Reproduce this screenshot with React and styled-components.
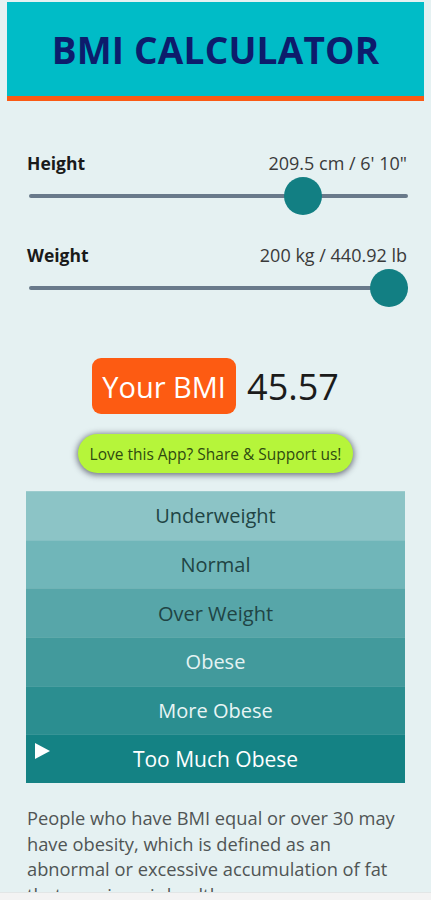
import React, { useState } from "react";
import styled, { createGlobalStyle } from "styled-components";

const GlobalStyle = createGlobalStyle`
    html, body {
        margin: 0;
        padding: 0;
        background: #e5f1f2;
        font-family: "Open Sans", "Noto Sans", sans-serif;
    }
`;

const categories = [
    { name: "Underweight", bg: "#8cc4c6", fg: "#1f4444" },
    { name: "Normal", bg: "#70b6b9", fg: "#1f4444" },
    { name: "Over Weight", bg: "#57a6a9", fg: "#1f4444" },
    { name: "Obese", bg: "#429a9c", fg: "#e4f3f3" },
    { name: "More Obese", bg: "#2b8e90", fg: "#e8f5f5" },
    { name: "Too Much Obese", bg: "#148284", fg: "#ffffff" },
];

export default function App() {
    const [height, setHeight] = useState(209.5);
    const [weight, setWeight] = useState(200);

    const totalInches = Math.round(height / 2.54);
    const feet = Math.floor(totalInches / 12);
    const inches = totalInches % 12;
    const bmi = (weight / Math.pow(height / 100, 2)).toFixed(2);
    const active = 5;

    return (
        <Page>
            <GlobalStyle />
            <Header>
                <Title>BMI CALCULATOR</Title>
            </Header>

            <Sliders>
                <LabelRow>
                    <Label>Height</Label>
                    <Value>
                        {height} cm / {feet}' {inches}"
                    </Value>
                </LabelRow>
                <Range
                    type="range"
                    min={60}
                    max={260}
                    step={0.5}
                    value={height}
                    onChange={(e) => setHeight(Number(e.target.value))}
                />
                <LabelRow $top>
                    <Label>Weight</Label>
                    <Value>
                        {weight} kg / {(weight * 2.2046).toFixed(2)} lb
                    </Value>
                </LabelRow>
                <Range
                    type="range"
                    min={10}
                    max={200}
                    value={weight}
                    onChange={(e) => setWeight(Number(e.target.value))}
                />
            </Sliders>

            <ResultRow>
                <BmiBadge>Your BMI</BmiBadge>
                <BmiValue>{bmi}</BmiValue>
            </ResultRow>

            <ShareWrap>
                <ShareButton>Love this App? Share &amp; Support us!</ShareButton>
            </ShareWrap>

            <Table>
                {categories.map((c, i) => (
                    <Row key={c.name} $bg={c.bg} $fg={c.fg} $active={i === active}>
                        {i === active && <Pointer />}
                        {c.name}
                    </Row>
                ))}
            </Table>

            <Info>
                People who have BMI equal or over 30 may have obesity, which is
                defined as an abnormal or excessive accumulation of fat that
                may impair health.
            </Info>

            <BottomBar />
        </Page>
    );
}

const Page = styled.div`
    height: 900px;
    overflow: hidden;
    padding-top: 2px;
    box-sizing: border-box;
`;

const Header = styled.header`
    margin: 0 7px;
    height: 94px;
    background: #00bcc7;
    border-bottom: 5px solid #fa5a14;
    display: flex;
    align-items: center;
    justify-content: center;
`;

const Title = styled.h1`
    margin: 0;
    font-size: 37px;
    font-weight: 700;
    color: #0d1c6c;
    letter-spacing: 0.2px;
`;

const Sliders = styled.section`
    margin-top: 51px;
    padding: 0 24px 0 27px;
`;

const LabelRow = styled.div`
    display: flex;
    justify-content: space-between;
    align-items: center;
    height: 22px;
    margin-top: ${(p) => (p.$top ? "29px" : "0")};
`;

const Label = styled.span`
    font-size: 17.5px;
    font-weight: 700;
    color: #1a1a1a;
`;

const Value = styled.span`
    font-size: 18px;
    color: #3a3a3a;
`;

const Range = styled.input`
    -webkit-appearance: none;
    appearance: none;
    display: block;
    width: calc(100% - 1px);
    margin: 3px 0 0 2px;
    height: 38px;
    background: transparent;

    &::-webkit-slider-runnable-track {
        height: 4px;
        background: #697a8b;
        border-radius: 2px;
    }

    &::-webkit-slider-thumb {
        -webkit-appearance: none;
        width: 38px;
        height: 38px;
        border-radius: 50%;
        background: #127f83;
        margin-top: -17px;
        border: none;
    }
`;

const ResultRow = styled.div`
    margin-top: 51px;
    display: flex;
    align-items: center;
    justify-content: center;
    gap: 11px;
`;

const BmiBadge = styled.div`
    background: #fd5b12;
    color: #fff;
    border-radius: 9px;
    height: 56px;
    width: 144px;
    display: flex;
    align-items: center;
    justify-content: center;
    font-size: 29px;
`;

const BmiValue = styled.div`
    font-size: 36px;
    color: #1b1b1b;
`;

const ShareWrap = styled.div`
    margin-top: 20px;
    display: flex;
    justify-content: center;
`;

const ShareButton = styled.button`
    width: 275px;
    height: 39px;
    padding: 0;
    border: none;
    border-radius: 20px;
    background: #b6f53a;
    color: #2f4a10;
    font-family: "Open Sans", sans-serif;
    font-size: 15.5px;
    box-shadow: 0 1px 6px 1px rgba(40, 40, 60, 0.65);
    cursor: pointer;
`;

const Table = styled.div`
    margin: 18px 26px 0 26px;
    display: flex;
    flex-direction: column;
`;

const Row = styled.div`
    position: relative;
    height: 48.7px;
    background: ${(p) => p.$bg};
    color: ${(p) => p.$fg};
    display: flex;
    align-items: center;
    justify-content: center;
    font-size: ${(p) => (p.$active ? "21px" : "20px")};
    border-top: 1px solid rgba(255, 255, 255, 0.15);
    box-sizing: border-box;
`;

const Pointer = styled.span`
    position: absolute;
    left: 9px;
    top: 8px;
    width: 0;
    height: 0;
    border-top: 8px solid transparent;
    border-bottom: 8px solid transparent;
    border-left: 15px solid #fff;
`;

const Info = styled.p`
    margin: 22px 30px 0 27px;
    font-size: 18.3px;
    line-height: 25.5px;
    color: #505555;
`;

const BottomBar = styled.div`
    position: fixed;
    left: 0;
    right: 0;
    bottom: 0;
    height: 7px;
    background: #f3f3f3;
    border-top: 1px solid #e2e6e6;
`;
